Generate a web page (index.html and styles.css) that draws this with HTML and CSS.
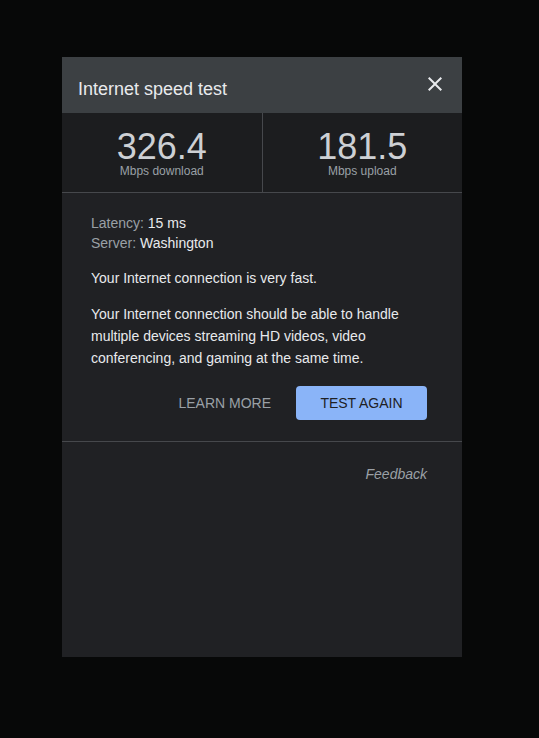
FILE: index.html
```html
<!DOCTYPE html>
<html>
<head>
<meta charset="utf-8">
<link rel="stylesheet" href="styles.css">
</head>
<body>
<div class="panel">
  <div class="header">
    <div class="title">Internet speed test</div>
    <svg class="close" width="24" height="24" viewBox="0 0 24 24"><path fill="#e8eaed" d="M19 6.41L17.59 5 12 10.59 6.41 5 5 6.41 10.59 12 5 17.59 6.41 19 12 13.41 17.59 19 19 17.59 13.41 12z"/></svg>
  </div>
  <div class="stats">
    <div class="stat">
      <div class="num">326.4</div>
      <div class="unit">Mbps download</div>
    </div>
    <div class="stat stat-right">
      <div class="num">181.5</div>
      <div class="unit">Mbps upload</div>
    </div>
  </div>
  <div class="body">
    <div class="meta">
      <div><span class="lbl">Latency:</span> 15 ms</div>
      <div><span class="lbl">Server:</span> Washington</div>
    </div>
    <p class="txt">Your Internet connection is very fast.</p>
    <p class="txt para">Your Internet connection should be able to handle multiple devices streaming HD videos, video conferencing, and gaming at the same time.</p>
    <div class="actions">
      <button class="btn btn-text">LEARN MORE</button>
      <button class="btn btn-primary">TEST AGAIN</button>
    </div>
  </div>
  <div class="footer">
    <span class="feedback">Feedback</span>
  </div>
</div>
</body>
</html>
```
FILE: styles.css
```css
html, body {
  margin: 0;
  padding: 0;
  background: #070808;
  font-family: "Liberation Sans", Arial, sans-serif;
}
body {
  width: 539px;
  height: 738px;
  overflow: hidden;
}
.panel {
  margin: 57px 0 0 62px;
  width: 400px;
  height: 600px;
  background: #202124;
  display: flex;
  flex-direction: column;
}
.header {
  height: 56px;
  box-sizing: border-box;
  background: #3c4043;
  padding: 22px 15px 0 16px;
  display: flex;
  justify-content: space-between;
  align-items: flex-start;
}
.title {
  font-size: 18px;
  line-height: 20px;
  color: #e8eaed;
}
.close {
  margin-top: -7px;
  display: block;
}
.stats {
  display: flex;
  background: #1c1d1f;
  border-bottom: 1px solid #46484c;
}
.stat {
  flex: 1;
  text-align: center;
  padding: 17px 0 14px;
}
.stat-right {
  border-left: 1px solid #46484c;
}
.num {
  font-size: 36px;
  line-height: 34px;
  color: #cdd0d4;
}
.unit {
  font-size: 12px;
  line-height: 14px;
  color: #9aa0a6;
}
.body {
  padding: 20px 35px 21px 29px;
  border-bottom: 1px solid #46484c;
}
.meta {
  font-size: 14px;
  line-height: 20px;
  color: #e8eaed;
}
.lbl {
  color: #9aa0a6;
}
.txt {
  margin: 14px 0 0;
  font-size: 14px;
  line-height: 22px;
  color: #e8eaed;
}
.actions {
  margin-top: 17px;
  display: flex;
  justify-content: flex-end;
}
.btn {
  font-family: "Liberation Sans", Arial, sans-serif;
  font-size: 14px;
  height: 34px;
  padding: 0 25px;
  border: none;
  border-radius: 4px;
  background: transparent;
  cursor: pointer;
}
.btn-text {
  color: #9aa0a6;
}
.btn-primary {
  background: #8ab4f8;
  color: #202124;
  width: 131px;
  padding: 0;
}
.footer {
  padding: 22px 35px 0 29px;
  text-align: right;
}
.feedback {
  font-size: 14px;
  line-height: 20px;
  font-style: italic;
  color: #9aa0a6;
}
```
